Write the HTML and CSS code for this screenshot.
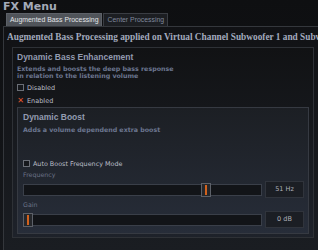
FILE: index.html
```html
<!DOCTYPE html>
<html lang="en">
<head>
    <meta charset="UTF-8">
    <meta name="viewport" content="width=device-width, initial-scale=1.0">
    <title>FX Menu</title>
    <link rel="stylesheet" href="styles.css">
</head>
<body>
    <h1 class="menu-title">FX Menu</h1>
    <div class="tabs">
        <div class="tab active">Augmented Bass Processing</div>
        <div class="tab">Center Processing</div>
    </div>
    <div class="panel">
        <div class="panel-head">Augmented Bass Processing applied on Virtual Channel Subwoofer 1 and Subwoofer 2</div>

        <div class="group">
            <div class="group-title">Dynamic Bass Enhancement</div>
            <div class="group-desc">Extends and boosts the deep bass response<br>in relation to the listening volume</div>
            <label class="option"><span class="box"></span>Disabled</label>
            <label class="option"><span class="box checked">&#x2715;</span>Enabled</label>

            <div class="group inner">
                <div class="group-title">Dynamic Boost</div>
                <div class="group-desc">Adds a volume dependend extra boost</div>
                <label class="option auto"><span class="box"></span>Auto Boost Frequency Mode</label>

                <div class="field-label">Frequency</div>
                <div class="slider-row">
                    <div class="track"><span class="thumb" style="left: 177px"></span></div>
                    <div class="value">51 Hz</div>
                </div>

                <div class="field-label">Gain</div>
                <div class="slider-row">
                    <div class="track"><span class="thumb" style="left: -1px"></span></div>
                    <div class="value">0 dB</div>
                </div>
            </div>
        </div>
    </div>
</body>
</html>
```

FILE: styles.css
```css
body { margin: 0; height: 250px; overflow: hidden; background: linear-gradient(#0e0f11, #15171b); font-family: "DejaVu Sans", sans-serif; color: #a4abbb; }
.menu-title { margin: 0; padding-left: 3px; height: 13px; font-size: 11px; line-height: 13px; font-weight: bold; color: #a3aab8; }

.tabs { display: flex; padding-left: 6px; height: 13px; }
.tab { padding: 0 3px; font-family: "Liberation Sans", sans-serif; font-size: 6.9px; line-height: 12px; color: #7f889c; background: #1c1e22; border: 1px solid #3a3d43; border-bottom: none; white-space: nowrap; }
.tab.active { background: #50545a; color: #e2e4e8; border-color: #5d6168; margin-right: 1px; }

.panel { margin-left: 3px; border-left: 1px solid #34373c; border-top: 1px solid #34373c; height: 223px; overflow: hidden; background: linear-gradient(#111215, #1a1d22); }
.panel-head { padding: 4px 0 0 3px; height: 16px; overflow: hidden; font-family: "Liberation Serif", serif; font-weight: bold; font-size: 9.3px; line-height: 12px; color: #a2aabd; white-space: nowrap; }

.group { margin-left: 8px; width: 296px; padding: 4px 0 3px 4px; border: 1px solid #2e3136; background: linear-gradient(#111214, #1e222a); }
.group-title { font-family: "Liberation Sans", sans-serif; font-size: 8.5px; line-height: 11px; font-weight: bold; color: #939bb0; }
.group-desc { margin-top: 2px; font-size: 6.3px; line-height: 7px; font-weight: bold; color: #6c7690; }
.option { display: flex; align-items: center; gap: 3px; margin-top: 4px; height: 9px; font-size: 6.5px; color: #b9bdc6; }
.box { width: 5px; height: 5px; border: 1px solid #6a6e76; background: #16181c; font-size: 8px; line-height: 5px; text-align: center; color: #e2562e; }
.box.checked { border: none; width: 7px; height: 7px; line-height: 7px; background: none; font-weight: bold; }

.group.inner { margin: 2px 0 0 0; width: 285px; padding: 4px 0 5px 5px; border-color: #363a42; background: linear-gradient(#1c1f24, #272d39); }
.inner .group-desc { margin-top: 3px; }
.option.auto { margin-top: 26px; font-size: 6.4px; }
.field-label { margin-top: 4px; font-size: 6.3px; line-height: 6px; color: #6a7287; }
.slider-row { display: flex; align-items: center; gap: 3px; margin-top: 3px; }
.slider-row + .field-label { margin-top: 4px; }
.track { position: relative; width: 237px; height: 10px; border: 1px solid #3a3f49; background: #121418; }
.thumb { position: absolute; top: -2px; width: 8px; height: 12px; border: 1px solid #5c6068; background: #25272b; }
.thumb::after { content: ""; position: absolute; left: 3px; top: 1px; width: 2px; height: 10px; background: #d2621e; }
.value { width: 37px; height: 15px; border: 1px solid #30343c; background: #1b1e24; font-size: 6.5px; line-height: 15px; text-align: center; color: #aeb2ba; }
```
